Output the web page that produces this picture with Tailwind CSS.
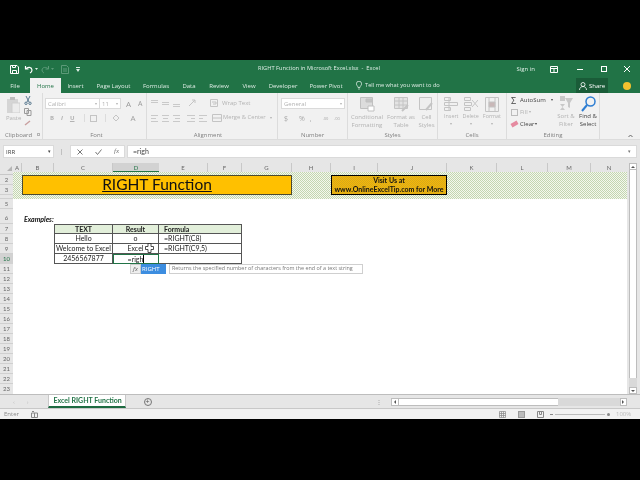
<!DOCTYPE html>
<html lang="en">
<head>
<meta charset="UTF-8">
<title>RIGHT Function in Microsoft Excel</title>
<script src="https://cdn.jsdelivr.net/npm/@tailwindcss/browser@4"></script>
</head>
<body class="bg-black w-[640px] h-[480px] overflow-hidden">
<div class="mt-[60px] h-[359px] w-[640px] flex flex-col bg-[#e6e6e6] font-['Open_Sans',sans-serif] text-[6px] leading-none blur-[0.35px]">

  <!-- title bar -->
  <div class="h-[18px] bg-[#217346] text-[#dfeee6] flex items-center relative shrink-0">
    <div class="flex items-center pl-[10px]">
      <svg width="9" height="9" viewBox="0 0 9 9" fill="none" stroke="#fff"><path d="M.5.5h6.5l1.500 1.500v6.500h-8z"/><path d="M2.500 5.500h4v3h-4zM2.500.5v2h3v-2"/></svg>
      <svg class="ml-[5px]" width="10" height="9" viewBox="0 0 10 9" fill="none" stroke="#fff" stroke-width="1.200"><path d="M1.500 1v3h3M1.800 4c2-2.500 6-2 6.200 1 0 1.500-1 2.500-2 3"/></svg>
      <svg class="ml-[1px]" width="3" height="2" viewBox="0 0 3 2" fill="#dfeee6"><path d="M0 0h3l-1.500 2z"/></svg>
      <svg class="ml-[3px]" width="9" height="9" viewBox="0 0 9 9" fill="none" stroke="#5c9a78"><path d="M7.500 1v3h-3M7.200 4c-2-2.500-6-2-6.200 1 0 1.500 1 2.500 2 3"/></svg>
      <svg class="ml-[1px]" width="3" height="2" viewBox="0 0 3 2" fill="#5c9a78"><path d="M0 0h3l-1.500 2z"/></svg>
      <svg class="ml-[7px]" width="8" height="9" viewBox="0 0 8 9" fill="none" stroke="#5c9a78"><path d="M.5.500h5l2 2v6h-7zM2 6h4M2 4h4"/></svg>
      <svg class="ml-[7px]" width="4" height="5" viewBox="0 0 4 5" fill="#dfeee6"><path d="M0 0h4v1h-4zM0 2h4l-2 3z"/></svg>
    </div>
    <div class="absolute left-[258px] top-[6px] whitespace-pre text-[5.7px]">RIGHT Function in Microsoft Excel.xlsx  -  Excel</div>
    <div class="ml-auto flex items-center">
      <span>Sign in</span>
      <svg class="ml-[15px]" width="8" height="7" viewBox="0 0 8 7" fill="none" stroke="#fff"><path d="M.5.5h7v6h-7zM.5 2.500h7M4 2.500v4"/></svg>
      <div class="ml-[19px] w-[6px] h-px bg-white"></div>
      <div class="ml-[18px] w-[6px] h-[6px] border border-white"></div>
      <svg class="ml-[17px] mr-[10px]" width="6" height="6" viewBox="0 0 6 6" stroke="#fff"><path d="M0 0l6 6M6 0l-6 6"/></svg>
    </div>
  </div>

  <!-- tabs -->
  <div class="h-[15px] bg-[#217346] text-[#dcebe3] flex items-center shrink-0">
    <div class="w-[30px] text-center">File</div>
    <div class="w-[31px] h-full bg-[#f1f1f1] text-[#217346] flex items-center justify-center">Home</div>
    <div class="w-[29px] text-center">Insert</div>
    <div class="w-[47px] text-center">Page Layout</div>
    <div class="w-[38px] text-center">Formulas</div>
    <div class="w-[28px] text-center">Data</div>
    <div class="w-[32px] text-center">Review</div>
    <div class="w-[28px] text-center">View</div>
    <div class="w-[40px] text-center">Developer</div>
    <div class="w-[46px] text-center">Power Pivot</div>
    <svg class="ml-[7px]" width="6" height="9" viewBox="0 0 6 9" fill="none" stroke="#dcebe3" stroke-width=".8"><path d="M2 6.500c0-1.500-1.600-2-1.600-3.700a2.600 2.600 0 0 1 5.200 0c0 1.700-1.600 2.200-1.600 3.700zM2.200 8h1.600"/></svg>
    <span class="ml-[3px] w-[75px] whitespace-nowrap text-[5.7px]">Tell me what you want to do</span>
    <div class="ml-[136px] w-[32px] h-full bg-[#1a5c38] flex items-center justify-center gap-[2px]">
      <svg width="8" height="8" viewBox="0 0 8 8" fill="none" stroke="#fff" stroke-width=".8"><circle cx="4" cy="2.500" r="2"/><path d="M.5 8c0-2 1.500-3.500 3.500-3.500s3.500 1.500 3.500 3.500"/></svg>
      <span class="text-white">Share</span>
    </div>
    <div class="ml-[15px] w-[8px] h-[8px] rounded-full bg-[#f3c22f]"></div>
  </div>

  <!-- ribbon -->
  <div class="h-[46px] bg-[#f1f1f1] flex text-[#b3b3b3] shrink-0">

    <!-- clipboard -->
    <div class="w-[43px] border-r border-[#dcdcdc] flex flex-col">
      <div class="flex-1 flex">
        <div class="w-[24px] pl-[6px] pt-[4px] flex flex-col">
          <svg width="14" height="16" viewBox="0 0 14 16"><path d="M1 2h11v14h-11z" fill="#d5d5d5"/><path d="M4 0h5v3h-5z" fill="#bdbdbd"/><path d="M6 6h8v10h-8z" fill="#ececec" stroke="#cfcfcf"/></svg>
          <span class="mt-[2px]">Paste</span>
        </div>
        <div class="pt-[3px] flex flex-col gap-[3px]">
          <svg width="8" height="9" viewBox="0 0 8 9" fill="none" stroke="#5a7a90"><path d="M2 0l3 6M6 0l-3 6"/><circle cx="2" cy="7.300" r="1.200"/><circle cx="6" cy="7.300" r="1.200"/></svg>
          <svg width="8" height="8" viewBox="0 0 8 8" fill="none" stroke="#9a9a9a"><path d="M.5.5h4v5h-4zM3 2.500h4v5h-4z"/></svg>
          <svg width="8" height="7" viewBox="0 0 8 7" stroke="#c9a0a0" stroke-width="1.500"><path d="M1 6l5-4"/></svg>
        </div>
      </div>
      <div class="h-[8px] pt-[1px] pl-[5px] text-[#808080] flex justify-between pr-[2px]"><span>Clipboard</span><span class="w-[3px] h-[3px] mt-[1px] border border-[#b5b5b5]"></span></div>
    </div>

    <!-- font -->
    <div class="w-[104px] border-r border-[#dcdcdc] flex flex-col">
      <div class="flex-1 pl-[2px] pt-[5px]">
        <div class="flex items-center">
          <div class="w-[55px] h-[11px] bg-white border border-[#dadada] flex items-center justify-between px-[2px]"><span>Calibri</span><span class="text-[4px]">▾</span></div>
          <div class="w-[21px] h-[11px] bg-white border border-l-0 border-[#dadada] flex items-center justify-between px-[2px]"><span>11</span><span class="text-[4px]">▾</span></div>
          <span class="ml-[5px] text-[8px] text-[#9a9a9a]">A</span>
          <span class="ml-[7px] text-[7px] text-[#9a9a9a]">A</span>
        </div>
        <div class="flex items-center mt-[5px] pl-[5px] font-bold">
          <span>B</span><span class="ml-[7px] italic">I</span><span class="ml-[7px] underline">U</span>
          <div class="ml-[9px] w-px h-[8px] bg-[#dcdcdc]"></div>
          <div class="ml-[5px] w-[7px] h-[7px] border border-[#c4c4c4]"></div>
          <div class="ml-[8px] w-px h-[8px] bg-[#dcdcdc]"></div>
          <svg class="ml-[6px]" width="8" height="8" viewBox="0 0 8 8" fill="none" stroke="#c4c4c4"><path d="M4 1l3 3-3 3-3-3z"/></svg>
          <span class="ml-[11px] text-[8px] font-normal text-[#a0a0a0]">A</span>
        </div>
      </div>
      <div class="h-[8px] pt-[1px] text-[#808080] flex justify-center pl-[4px]">Font</div>
    </div>

    <!-- alignment -->
    <div class="w-[131px] border-r border-[#dcdcdc] flex flex-col">
      <div class="flex-1 pl-[4px] pt-[5px]">
        <div class="flex items-center h-[10px]">
          <svg width="29" height="7" viewBox="0 0 29 7" stroke="#c9c9c9"><path d="M0 .5h7M0 2.500h7M11 2.500h7M11 4.500h7M22 4.500h7M22 6.500h7"/></svg>
          <svg class="ml-[8px]" width="9" height="8" viewBox="0 0 9 8" fill="none" stroke="#c4c4c4"><path d="M1 7l6-6M4 1h3v3"/></svg>
          <svg class="ml-[13px]" width="9" height="8" viewBox="0 0 9 8" fill="none" stroke="#c4c4c4"><path d="M.5.500h7v7h-7zM2 3h4v2h-3"/></svg>
          <span class="ml-[3px]">Wrap Text</span>
        </div>
        <div class="flex items-center h-[10px] mt-[5px]">
          <svg width="29" height="7" viewBox="0 0 29 7" stroke="#c9c9c9"><path d="M0 .5h7M0 3.500h5M0 6.500h7M11 .5h7M12 3.500h5M11 6.500h7M22 .5h7M24 3.500h5M22 6.500h7"/></svg>
          <svg class="ml-[7px]" width="21" height="7" viewBox="0 0 21 7" stroke="#c9c9c9"><path d="M0 .5h8M4 3.500h4M0 6.500h8M12 .5h8M12 3.500h4M12 6.500h8"/></svg>
          <svg class="ml-[4px]" width="10" height="8" viewBox="0 0 10 8" fill="none" stroke="#c4c4c4"><path d="M.5.500h9v7h-9zM.5 4h9"/></svg>
          <span class="ml-[1px] text-[5.8px]">Merge &amp; Center</span>
          <span class="ml-[4px] text-[4px]">▾</span>
        </div>
      </div>
      <div class="h-[8px] pt-[1px] text-[#808080] flex justify-center pr-[8px]">Alignment</div>
    </div>

    <!-- number -->
    <div class="w-[70px] border-r border-[#dcdcdc] flex flex-col">
      <div class="flex-1 pl-[3px] pt-[5px]">
        <div class="w-[64px] h-[11px] bg-white border border-[#dadada] flex items-center justify-between px-[2px]"><span>General</span><span class="text-[4px]">▾</span></div>
        <div class="flex items-center mt-[6px] pl-[3px] text-[7px] text-[#a8a8a8]">
          <span>$</span><span class="ml-[11px]">%</span><span class="ml-[5px]">,</span>
          <span class="ml-[11px] text-[4px]">.00</span><span class="ml-[6px] text-[4px]">.00</span>
        </div>
      </div>
      <div class="h-[8px] pt-[1px] text-[#808080] flex justify-center">Number</div>
    </div>

    <!-- styles -->
    <div class="w-[90px] border-r border-[#dcdcdc] flex flex-col">
      <div class="flex-1 flex pt-[4px] leading-[8px] text-center">
        <div class="w-[38px] flex flex-col items-center">
          <svg width="15" height="15" viewBox="0 0 15 15" fill="#dcdcdc" stroke="#c0c0c0"><path d="M.5.5h12v11h-12z"/><path d="M6 2h6v3h-6z" fill="#c4c4c4"/><path d="M8 9h6v5h-6z" fill="#fff"/></svg>
          <span class="mt-[1px]">Conditional<br>Formatting</span>
        </div>
        <div class="w-[30px] flex flex-col items-center">
          <svg width="15" height="15" viewBox="0 0 15 15" fill="#e3e3e3" stroke="#c4c4c4"><path d="M.5.5h13v11h-13zM.5 4h13M.5 8h13M5 .5v11M9 .5v11"/><path d="M8 14l6-6" stroke-width="2"/></svg>
          <span class="mt-[1px]">Format as<br>Table</span>
        </div>
        <div class="flex-1 flex flex-col items-center">
          <svg width="15" height="15" viewBox="0 0 15 15" fill="#eee" stroke="#c4c4c4"><path d="M.5.5h12v12h-12z"/><path d="M7 13l6-7" stroke-width="2"/></svg>
          <span class="mt-[1px]">Cell<br>Styles</span>
        </div>
      </div>
      <div class="h-[8px] pt-[1px] text-[#808080] flex justify-center">Styles</div>
    </div>

    <!-- cells -->
    <div class="w-[69px] border-r border-[#dcdcdc] flex flex-col">
      <div class="flex-1 flex justify-between pl-[6px] pr-[5px] pt-[4px] text-[5.4px]">
        <div class="flex flex-col items-center">
          <svg width="14" height="15" viewBox="0 0 14 15" fill="none" stroke="#c4c4c4"><path d="M.5.500h6v3h-6zM.5 5.500h13v3h-13zM.5 10.500h6v3h-6zM5 .5v13"/></svg>
          <span class="mt-[2px]">Insert</span>
          <span class="mt-[3px] text-[4px]">▾</span>
        </div>
        <div class="flex flex-col items-center">
          <svg width="14" height="15" viewBox="0 0 14 15" fill="none" stroke="#c4c4c4"><path d="M.5.500h6v3h-6zM.5 5.500h7v3h-7zM.5 10.500h6v3h-6zM8 3l6 7M14 3l-6 7"/></svg>
          <span class="mt-[2px]">Delete</span>
          <span class="mt-[3px] text-[4px]">▾</span>
        </div>
        <div class="flex flex-col items-center">
          <svg width="14" height="15" viewBox="0 0 14 15" fill="none" stroke="#c4c4c4"><path d="M.5.500h13v14h-13zM4 .5v14M10 .5v14"/><path d="M4 5h6v5h-6z" fill="#c9b8b8"/></svg>
          <span class="mt-[2px]">Format</span>
          <span class="mt-[3px] text-[4px]">▾</span>
        </div>
      </div>
      <div class="h-[8px] pt-[1px] text-[#808080] flex justify-center">Cells</div>
    </div>

    <!-- editing -->
    <div class="w-[93px] border-r border-[#dcdcdc] flex flex-col">
      <div class="flex-1 flex pt-[3px]">
        <div class="w-[48px] pl-[4px] flex flex-col gap-[4px]">
          <div class="flex items-center h-[8px] text-[#444]"><span class="text-[9px] w-[9px]">Σ</span><span>AutoSum</span><span class="ml-[5px] text-[4px]">▾</span></div>
          <div class="flex items-center h-[8px]"><div class="w-[7px] h-[7px] border border-[#bbb] mr-[2px]"></div><span>Fill</span><span class="ml-[1px] text-[4px]">▾</span></div>
          <div class="flex items-center h-[8px] text-[#444]"><div class="w-[7px] h-[4px] bg-[#e58aa0] rotate-[-30deg] mr-[2px]"></div><span>Clear</span><span class="ml-[1px] text-[4px]">▾</span></div>
        </div>
        <div class="w-[22px] flex flex-col items-center leading-[8px] text-center">
          <svg width="14" height="15" viewBox="0 0 14 15" fill="#c8c8c8"><path d="M1 0h5v5h-5zM1 8h5l-5 6h5z"/><path d="M6 2h8l-3 5v5l-2-1v-4z"/></svg>
          <span class="mt-[1px]">Sort &amp;<br>Filter</span>
        </div>
        <div class="flex-1 flex flex-col items-center leading-[8px] text-center text-[#444]">
          <svg width="15" height="16" viewBox="0 0 15 16" fill="none" stroke="#2d7dd2" stroke-width="1.500"><circle cx="9.500" cy="5.500" r="4.500"/><path d="M6 9l-5 6" stroke-width="2"/></svg>
          <span>Find &amp;<br>Select</span>
        </div>
      </div>
      <div class="h-[8px] pt-[1px] text-[#808080] flex justify-center">Editing</div>
    </div>
    <div class="flex-1 flex items-end justify-end pr-[7px] pb-[2px]">
      <svg width="5" height="3" viewBox="0 0 5 3" fill="none" stroke="#666"><path d="M.5 3l2-2 2 2"/></svg>
    </div>
  </div>

  <!-- formula bar -->
  <div class="h-[24px] flex items-center text-[7px] text-[#444] shrink-0 border-t border-[#dcdcdc]">
    <div class="ml-[3px] w-[51px] h-[13px] bg-white border border-[#dadada] flex items-center justify-between px-[2px] text-[6px]"><span>IRR</span><span class="text-[5px]">▾</span></div>
    <div class="ml-[7px] w-px h-[6px] bg-[#c0c0c0]"></div>
    <div class="ml-[8px] w-[55px] h-[13px] bg-white border border-[#dadada] flex items-center justify-between pl-[6px] pr-[5px] text-[#777]">
      <svg width="6" height="6" viewBox="0 0 6 6" stroke="#777"><path d="M.5.500l5 5M5.500.500l-5 5"/></svg>
      <svg width="7" height="6" viewBox="0 0 7 6" fill="none" stroke="#777"><path d="M.5 3l2 2.500 4-5"/></svg>
      <span class="italic font-['Liberation_Serif',serif]">fx</span>
    </div>
    <div class="ml-[2px] w-[510px] h-[13px] bg-white border border-[#dadada] flex items-center justify-between px-[5px] font-['Lato',sans-serif]"><span>=righ</span><span class="text-[5px] text-[#777]">▾</span></div>
  </div>

  <!-- sheet -->
  <div class="h-[231px] flex shrink-0 text-[#555]">
    <!-- row numbers -->
    <div class="w-[13px] flex flex-col text-center font-['Lato',sans-serif] text-[#666] shrink-0">
      <div class="h-[9px] bg-[#e6e6e6] flex items-end justify-end p-px"><div class="w-0 h-0 border-l-[5px] border-t-[5px] border-l-transparent border-t-transparent border-b-0 border-r-[5px] border-r-[#b5b5b5]"></div></div>
      <div class="h-[3px] border-b border-[#c8c8c8]"></div>
      <div class="h-[10px] flex items-center justify-center border-b border-[#d0d0d0]">2</div>
      <div class="h-[10px] flex items-center justify-center border-b border-[#d0d0d0]">3</div>
      <div class="h-[4px] border-b border-[#d0d0d0]"></div>
      <div class="h-[10px] flex items-center justify-center border-b border-[#d0d0d0]">5</div>
      <div class="h-[15px] flex items-end justify-center pb-[2px] border-b border-[#d0d0d0]">6</div>
      <div class="h-[10px] flex items-center justify-center border-b border-[#d0d0d0]">7</div>
      <div class="h-[10px] flex items-center justify-center border-b border-[#d0d0d0]">8</div>
      <div class="h-[10px] flex items-center justify-center border-b border-[#d0d0d0]">9</div>
      <div class="h-[10px] flex items-center justify-center bg-[#d2d2d2] text-[#217346]">10</div>
      <div class="h-[10px] flex items-center justify-center border-b border-[#d0d0d0]">11</div>
      <div class="h-[10px] flex items-center justify-center border-b border-[#d0d0d0]">12</div>
      <div class="h-[10px] flex items-center justify-center border-b border-[#d0d0d0]">13</div>
      <div class="h-[10px] flex items-center justify-center border-b border-[#d0d0d0]">14</div>
      <div class="h-[10px] flex items-center justify-center border-b border-[#d0d0d0]">15</div>
      <div class="h-[10px] flex items-center justify-center border-b border-[#d0d0d0]">16</div>
      <div class="h-[10px] flex items-center justify-center border-b border-[#d0d0d0]">17</div>
      <div class="h-[10px] flex items-center justify-center border-b border-[#d0d0d0]">18</div>
      <div class="h-[10px] flex items-center justify-center border-b border-[#d0d0d0]">19</div>
      <div class="h-[10px] flex items-center justify-center border-b border-[#d0d0d0]">20</div>
      <div class="h-[10px] flex items-center justify-center border-b border-[#d0d0d0]">21</div>
      <div class="h-[10px] flex items-center justify-center border-b border-[#d0d0d0]">22</div>
      <div class="h-[10px] flex items-center justify-center">23</div>
    </div>

    <div class="w-[614px] flex flex-col shrink-0">
      <!-- column letters -->
      <div class="h-[9px] flex text-center leading-[9px] font-['Lato',sans-serif] text-[#666] shrink-0">
        <div class="w-[9px] border-r border-[#c8c8c8]">A</div>
        <div class="w-[32px] border-r border-[#c8c8c8]">B</div>
        <div class="w-[59px] border-r border-[#c8c8c8]">C</div>
        <div class="w-[46px] bg-[#d2d2d2] text-[#217346] border-b border-[#217346]">D</div>
        <div class="w-[49px] border-r border-[#c8c8c8]">E</div>
        <div class="w-[34px] border-r border-[#c8c8c8]">F</div>
        <div class="w-[50px] border-r border-[#c8c8c8]">G</div>
        <div class="w-[39px] border-r border-[#c8c8c8]">H</div>
        <div class="w-[47px] border-r border-[#c8c8c8]">I</div>
        <div class="w-[69px] border-r border-[#c8c8c8]">J</div>
        <div class="w-[50px] border-r border-[#c8c8c8]">K</div>
        <div class="w-[51px] border-r border-[#c8c8c8]">L</div>
        <div class="w-[43px] border-r border-[#c8c8c8]">M</div>
        <div class="w-[36px]">N</div>
      </div>

      <!-- cells -->
      <div class="relative flex-1 bg-white grid grid-cols-[9px_32px_59px_46px_49px_34px_50px_39px_47px_69px_50px_51px_43px_36px] grid-rows-[3px_10px_10px_4px_10px_15px_repeat(17,10px)] font-['Lato',sans-serif] text-[7px] text-[#222]">
        <div class="col-start-1 col-end-15 row-start-1 row-end-5 bg-[repeating-conic-gradient(#c3d6b0_0_25%,#f4f7ee_0_50%)] bg-[length:2px_2px]"></div>
        <div class="col-start-2 col-end-8 row-start-2 row-end-4 bg-[#ffc000] border border-[#4a4a30] flex items-center justify-center text-[15.500px] text-[#111] underline">RIGHT Function</div>
        <div class="col-start-9 col-end-11 row-start-2 row-end-4 bg-[repeating-conic-gradient(#f2b90a_0_25%,#d9a81a_0_50%)] bg-[length:2px_2px] border border-black flex flex-col items-center justify-around font-bold text-[#111]"><span>Visit Us at</span><span>www.OnlineExcelTip.com for More</span></div>

        <div class="col-start-2 col-end-4 row-start-6 flex items-end pl-[2px] pb-[1px] font-bold italic text-[#111]">Examples:</div>

        <div class="col-start-3 row-start-7 bg-[#e2efda] border border-[#555] flex items-center justify-center font-bold">TEXT</div>
        <div class="col-start-4 row-start-7 bg-[#e2efda] border border-l-0 border-[#555] flex items-center justify-center font-bold">Result</div>
        <div class="col-start-5 col-end-7 row-start-7 bg-[#e2efda] border border-l-0 border-[#555] flex items-center pl-[5px] font-bold">Formula</div>

        <div class="col-start-3 row-start-8 border border-t-0 border-[#555] flex items-center justify-center">Hello</div>
        <div class="col-start-4 row-start-8 border-r border-b border-[#555] flex items-center justify-center">o</div>
        <div class="col-start-5 col-end-7 row-start-8 border-r border-b border-[#555] flex items-center pl-[5px]">=RIGHT(C8)</div>

        <div class="col-start-3 row-start-9 border border-t-0 border-[#555] flex items-center justify-center whitespace-nowrap">Welcome to Excel</div>
        <div class="col-start-4 row-start-9 border-r border-b border-[#555] flex items-center justify-center">Excel</div>
        <div class="col-start-5 col-end-7 row-start-9 border-r border-b border-[#555] flex items-center pl-[5px]">=RIGHT(C9,5)</div>

        <div class="col-start-3 row-start-10 border border-t-0 border-[#555] flex items-center justify-center">2456567877</div>
        <div class="col-start-4 row-start-10 border border-[#217346] flex items-center justify-center">=righ<span class="w-px h-[8px] bg-black"></span></div>
        <div class="col-start-5 col-end-7 row-start-10 border-r border-b border-[#555]"></div>

        <!-- pointer over D9 -->
        <svg class="absolute left-[132px] top-[71px]" width="9" height="10" viewBox="0 0 9 10" fill="#fff" stroke="#222" stroke-width=".8"><path d="M3 .5h3v3h2.500v3h-2.500v3h-3v-3h-2.500v-3h2.500z"/></svg>

        <!-- autocomplete -->
        <div class="absolute left-[117px] top-[92px] flex items-stretch h-[10px] text-[6px] font-['Open_Sans',sans-serif]">
          <div class="w-[11px] bg-[#eee] border border-[#ccc] flex items-center justify-center text-[#555]">
            <span class="italic text-[6px]">fx</span>
          </div>
          <div class="w-[25px] bg-[#3c8de0] text-white flex items-center pl-[1px]">RIGHT</div>
          <div class="ml-[3px] w-[194px] bg-white border border-[#cfcfcf] text-[#777] text-[5.400px] flex items-center pl-[2px] whitespace-nowrap">Returns the specified number of characters from the end of a text string</div>
        </div>
      </div>
    </div>

    <!-- vertical scrollbar -->
    <div class="w-[13px] pl-[2px] pr-[3px] flex flex-col bg-[#e6e6e6]">
      <div class="h-[7px] bg-white border border-[#bdbdbd] flex items-center justify-center"><div class="border-x-[2px] border-b-[2px] border-x-transparent border-b-[#555]"></div></div>
      <div class="h-[208px] bg-white border-x border-[#bdbdbd]"></div>
      <div class="flex-1 bg-[#d9d9d9]"></div>
      <div class="h-[7px] bg-white border border-[#bdbdbd] flex items-center justify-center"><div class="border-x-[2px] border-t-[2px] border-x-transparent border-t-[#555]"></div></div>
    </div>
  </div>

  <!-- sheet tabs -->
  <div class="h-[14px] border-t border-[#bdbdbd] flex items-center bg-[#e6e6e6] shrink-0">
    <span class="ml-[13px] text-[#c0c0c0]">‹</span>
    <span class="ml-[12px] text-[#c0c0c0]">›</span>
    <div class="ml-[19px] w-[78px] h-full bg-white border-x border-b-2 border-x-[#c8c8c8] border-b-[#1d6b41] text-[#217346] font-['Lato',sans-serif] font-bold text-[7px] flex items-center justify-center pl-[2px]">Excel RIGHT Function</div>
    <div class="ml-[18px] w-[8px] h-[8px] rounded-full border border-[#777] text-[#555] flex items-center justify-center text-[7px]">+</div>
    <span class="ml-[224px] text-[#999]">⋮</span>
    <div class="ml-[9px] flex items-center h-[8px]">
      <div class="w-[8px] h-full bg-white border border-[#bdbdbd] flex items-center justify-center"><div class="border-y-[2px] border-r-[2px] border-y-transparent border-r-[#555]"></div></div>
      <div class="w-[159px] h-full bg-white border-y border-[#bdbdbd]"></div>
      <div class="w-[62px] h-full bg-[#d9d9d9]"></div>
      <div class="w-[7px] h-full bg-white border border-[#bdbdbd] flex items-center justify-center"><div class="border-y-[2px] border-l-[2px] border-y-transparent border-l-[#555]"></div></div>
    </div>
  </div>

  <!-- status bar -->
  <div class="h-[11px] border-t border-[#c8c8c8] bg-[#f1f1f1] flex items-center text-[#888] shrink-0">
    <span class="ml-[4px]">Enter</span>
    <svg class="ml-[12px]" width="7" height="7" viewBox="0 0 7 7" fill="none" stroke="#888"><path d="M.5 2h6v4.500h-6zM3.500 2v4.500M1 .5h2"/></svg>
    <svg class="ml-[461px]" width="7" height="7" viewBox="0 0 7 7" fill="none" stroke="#888" stroke-width=".7"><path d="M.5.5h6v6h-6zM.5 2.500h6M.5 4.500h6M2.500.5v6M4.500.5v6"/></svg>
    <div class="ml-[12px] w-[7px] h-[7px] bg-[#bbb] border border-[#999]"></div>
    <svg class="ml-[12px]" width="7" height="7" viewBox="0 0 7 7" fill="none" stroke="#888"><path d="M.5.5h6v6h-6zM2.500.5v3h2v-3"/></svg>
    <div class="ml-[6px] w-[3px] h-px bg-[#888]"></div>
    <div class="ml-[2px] w-[50px] h-px bg-[#bbb]"></div>
    <div class="ml-[2px] w-[3px] h-[3px] rounded-full bg-[#888]"></div>
    <span class="ml-[6px] text-[#bbb]">100%</span>
  </div>
</div>
</body>
</html>
